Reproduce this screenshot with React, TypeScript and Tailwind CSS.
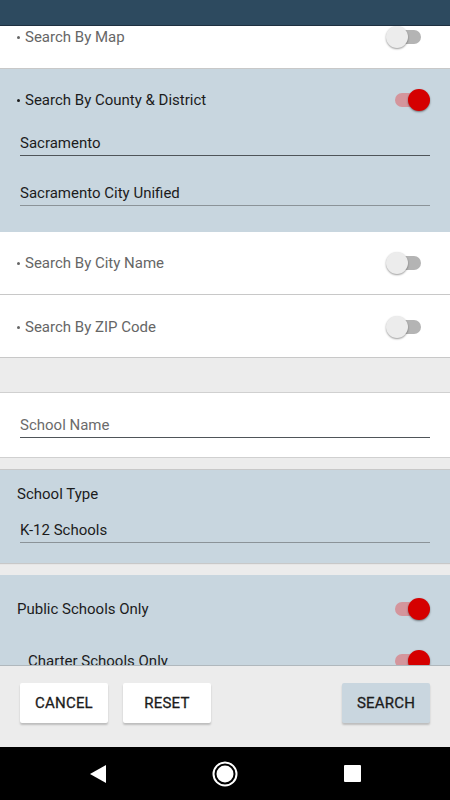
import React from 'react'

const FONT = { fontFamily: 'Roboto, "Noto Sans", sans-serif' }

function Toggle({ on }: { on: boolean }) {
  return (
    <div className="relative w-[44px] h-[22px] flex items-center shrink-0">
      <div
        className={`ml-[9px] w-[26px] h-[14px] rounded-full ${on ? 'bg-[#d4959c]' : 'bg-[#b4b4b4]'}`}
      />
      {on ? (
        <div className="absolute right-0 top-0 w-[22px] h-[22px] rounded-full bg-[#d50000] shadow-[0_1px_2px_rgba(0,0,0,0.45)]" />
      ) : (
        <div className="absolute left-0 top-0 w-[22px] h-[22px] rounded-full bg-[#ececec] shadow-[0_1px_2px_rgba(0,0,0,0.4)]" />
      )}
    </div>
  )
}

function OptionRow({
  label,
  on,
  className,
}: {
  label: string
  on: boolean
  className?: string
}) {
  return (
    <div className={`flex items-center justify-between pl-[17px] pr-[20px] h-[22px] ${className || ''}`}>
      <div className={`flex items-center text-[15px] ${on ? 'text-[#1c1c1c]' : 'text-[#666666]'}`}>
        <span className="w-[3px] h-[3px] rounded-full bg-current mr-[5px] mt-[1px]" />
        <span>{label}</span>
      </div>
      <Toggle on={on} />
    </div>
  )
}

function Field({ value, line, placeholder }: { value: string; line: string; placeholder?: boolean }) {
  return (
    <div className="mx-[20px]">
      <div
        className={`text-[15px] leading-[20px] pb-[2px] border-b ${line} ${
          placeholder ? 'text-[#6b6b6b]' : 'text-[#1c1c1c]'
        }`}
      >
        {value}
      </div>
    </div>
  )
}

function Btn({ label, blue }: { label: string; blue?: boolean }) {
  return (
    <button
      className={`w-[88px] h-[40px] rounded-[2px] text-[15px] font-normal tracking-[0.2px] text-[#1c1c1c] [-webkit-text-stroke:0.3px_#1c1c1c] shadow-[0_2px_2px_rgba(0,0,0,0.2)] ${
        blue ? 'bg-[#c9d6df]' : 'bg-white'
      }`}
    >
      {label}
    </button>
  )
}

export default function App() {
  return (
    <div className="w-[450px] h-[800px] flex flex-col bg-[#ececec] overflow-hidden" style={FONT}>
      <div className="h-[26px] bg-[#2d4a5f] border-b border-[#1e3040] shrink-0" />
      <div className="flex-1 flex flex-col overflow-hidden">
        <div className="h-[43px] bg-white border-b border-[#c8c8c8] shrink-0">
          <OptionRow label="Search By Map" on={false} />
        </div>
        <div className="h-[163px] bg-[#c8d6df] shrink-0 pt-[20px]">
          <OptionRow label="Search By County & District" on />
          <div className="mt-[22px]">
            <Field value="Sacramento" line="border-[#4f5559]" />
          </div>
          <div className="mt-[27px]">
            <Field value="Sacramento City Unified" line="border-[#8b9398]" />
          </div>
        </div>
        <div className="h-[63px] bg-white border-b border-[#c8c8c8] flex items-center shrink-0">
          <OptionRow label="Search By City Name" on={false} className="w-full" />
        </div>
        <div className="h-[63px] bg-white border-b border-[#c8c8c8] flex items-center shrink-0 pt-[2px]">
          <OptionRow label="Search By ZIP Code" on={false} className="w-full" />
        </div>
        <div className="h-[34px] shrink-0" />
        <div className="h-[66px] bg-white border-t border-b border-[#d0d0d0] shrink-0 pt-[22px]">
          <Field value="School Name" line="border-[#4f5559]" placeholder />
        </div>
        <div className="h-[12px] shrink-0 border-b border-[#c8c8c8]" />
        <div className="h-[93px] bg-[#c8d6df] shrink-0 pt-[14px] shadow-[0_1px_1px_rgba(0,0,0,0.15)]">
          <div className="pl-[17px] text-[15px] text-[#1c1c1c] leading-[20px]">School Type</div>
          <div className="mt-[16px]">
            <Field value="K-12 Schools" line="border-[#8b9398]" />
          </div>
        </div>
        <div className="h-[12px] shrink-0" />
        <div className="flex-1 bg-[#c8d6df] border-b border-[#b0b8bd] pt-[20px] overflow-hidden">
          <div className="flex items-center justify-between pl-[17px] pr-[20px] h-[22px] mt-[3px]">
            <span className="text-[15px] text-[#1c1c1c]">Public Schools Only</span>
            <Toggle on />
          </div>
          <div className="flex items-center justify-between pl-[28px] pr-[20px] h-[22px] mt-[30px]">
            <span className="text-[15px] text-[#1c1c1c]">Charter Schools Only</span>
            <Toggle on />
          </div>
        </div>
      </div>
      <div className="h-[81px] shrink-0 flex items-start pt-[17px] px-[20px] gap-[15px] bg-[#ececec]">
        <Btn label="CANCEL" />
        <Btn label="RESET" />
        <div className="flex-1" />
        <Btn label="SEARCH" blue />
      </div>
      <div className="h-[53px] bg-black shrink-0 flex items-center pl-[90px] gap-[106px]">
        <svg width="16" height="18" viewBox="0 0 16 18">
          <path d="M16 0 L0 9 L16 18 Z" fill="white" />
        </svg>
        <svg width="26" height="26" viewBox="0 0 26 26">
          <circle cx="13" cy="13" r="11.5" fill="none" stroke="white" strokeWidth="2" />
          <circle cx="13" cy="13" r="8.5" fill="white" />
        </svg>
        <div className="w-[17px] h-[17px] bg-white rounded-[1px]" />
      </div>
    </div>
  )
}
